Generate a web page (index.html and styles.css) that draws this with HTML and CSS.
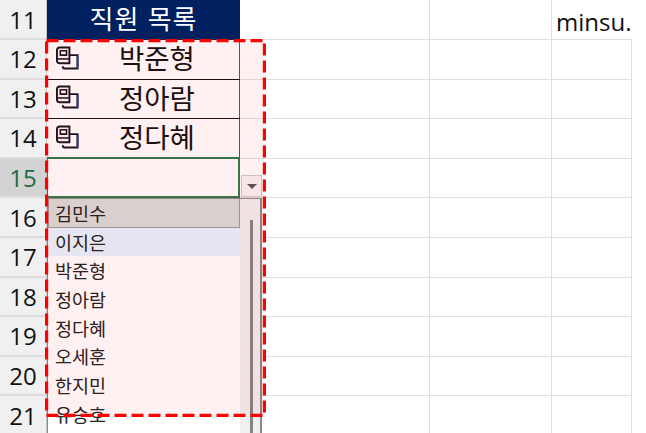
FILE: index.html
```html
<!DOCTYPE html>
<html lang="ko">
<head>
    <meta charset="UTF-8">
    <meta name="viewport" content="width=device-width, initial-scale=1.0">
    <title>직원 목록</title>

    <link rel="stylesheet" href="styles.css">
</head>
<body>
    <svg class="defs" width="0" height="0">
        <symbol id="bookIcon" viewBox="0 0 24 24">
            <path d="M10 9h12.5v14H9.5a2.5 2.5 0 0 1-2.5-2.5" fill="none" stroke="#14141f" stroke-width="2"/>
            <path d="M22.5 9.5v13.5" fill="none" stroke="#24408c" stroke-width="2"/>
            <path d="M4 1h10v16.5H4a3 3 0 0 1-3-3V4a3 3 0 0 1 3-3z" fill="#fff6f5" stroke="#14141f" stroke-width="2"/>
            <path d="M4.5 4.5h6.5v4.5H4.5z" fill="none" stroke="#14141f" stroke-width="1.6"/>
            <path d="M1.5 13h12" fill="none" stroke="#14141f" stroke-width="1.6"/>
        </symbol>
    </svg>

    <div class="sheet">
        <div class="rowHead">11</div>
        <div class="cell titleCell">직원 목록</div>
        <div class="cell"></div>
        <div class="cell"></div>
        <div class="cell emailCell">minsu.</div>

        <div class="rowHead">12</div>
        <div class="cell nameCell"><svg class="bookIcon"><use href="#bookIcon"/></svg><span>박준형</span></div>
        <div class="cell"></div>
        <div class="cell"></div>
        <div class="cell"></div>

        <div class="rowHead">13</div>
        <div class="cell nameCell"><svg class="bookIcon"><use href="#bookIcon"/></svg><span>정아람</span></div>
        <div class="cell"></div>
        <div class="cell"></div>
        <div class="cell"></div>

        <div class="rowHead">14</div>
        <div class="cell nameCell"><svg class="bookIcon"><use href="#bookIcon"/></svg><span>정다혜</span></div>
        <div class="cell"></div>
        <div class="cell"></div>
        <div class="cell"></div>

        <div class="rowHead active">15</div>
        <div class="cell activeCell"></div>
        <div class="cell"></div>
        <div class="cell"></div>
        <div class="cell"></div>

        <div class="rowHead">16</div>
        <div class="cell"></div>
        <div class="cell"></div>
        <div class="cell"></div>
        <div class="cell"></div>

        <div class="rowHead">17</div>
        <div class="cell"></div>
        <div class="cell"></div>
        <div class="cell"></div>
        <div class="cell"></div>

        <div class="rowHead">18</div>
        <div class="cell"></div>
        <div class="cell"></div>
        <div class="cell"></div>
        <div class="cell"></div>

        <div class="rowHead">19</div>
        <div class="cell"></div>
        <div class="cell"></div>
        <div class="cell"></div>
        <div class="cell"></div>

        <div class="rowHead">20</div>
        <div class="cell"></div>
        <div class="cell"></div>
        <div class="cell"></div>
        <div class="cell"></div>

        <div class="rowHead">21</div>
        <div class="cell"></div>
        <div class="cell"></div>
        <div class="cell"></div>
        <div class="cell"></div>

        <div class="dropButton"><div class="arrow"></div></div>

        <div class="dropList">
            <ul>
                <li class="current">김민수</li>
                <li class="hover">이지은</li>
                <li>박준형</li>
                <li>정아람</li>
                <li>정다혜</li>
                <li>오세훈</li>
                <li>한지민</li>
                <li>유승호</li>
            </ul>
            <div class="scrollTrack"><div class="scrollThumb"></div></div>
        </div>

        <div class="highlight">
            <svg width="221" height="378">
                <rect x="1.5" y="1.5" width="218" height="375" fill="none" stroke="#ff0000" stroke-width="3.4" stroke-dasharray="12 5"/>
            </svg>
        </div>
    </div>
</body>
</html>
```

FILE: styles.css
```css
html, body{
    margin: 0;
    height: 100%;
    overflow: hidden;
    background-color: white;
}

.defs{
    display: block;
}

.sheet{
    position: relative;
    width: 632px;
    height: 433px;
    overflow: hidden;
    display: grid;
    grid-template-columns: 47px 193px 190px 122px 80px;
    grid-template-rows: 40px;
    grid-auto-rows: 39.6px;
    font-family: "Open Sans", "Noto Sans CJK KR", sans-serif;
    color: #111;
}

.rowHead{
    display: flex;
    align-items: center;
    justify-content: center;
    background-color: #f0f0f0;
    border-bottom: 2px solid #dcdcdc;
    border-right: 1px solid #c8c8c8;
    font-size: 24px;
    box-sizing: border-box;
}

.rowHead.active{
    background-color: #d3d3d3;
    color: #1d6b3e;
}

.cell{
    box-sizing: border-box;
    border-right: 1px solid #e0e0e0;
    border-bottom: 1px solid #e0e0e0;
    min-width: 0;
    white-space: nowrap;
}

.titleCell{
    display: flex;
    align-items: center;
    justify-content: center;
    background-color: #002060;
    color: white;
    font-family: "Noto Sans CJK KR", sans-serif;
    font-size: 26px;
    line-height: 1.2;
    letter-spacing: 1px;
    border: none;
    padding-bottom: 4px;
}

.emailCell{
    padding-left: 4px;
    font-size: 24px;
    line-height: 39px;
    padding-top: 2px;
    border-right: none;
}

.nameCell{
    display: flex;
    align-items: center;
    border-right: 1px solid #555;
    border-bottom: 1px solid #111;
    padding-left: 9px;
    padding-bottom: 3px;
    font-family: "Noto Sans CJK KR", sans-serif;
    font-size: 27.5px;
    line-height: 1.2;
}

.nameCell span{
    margin-left: 40px;
}

.bookIcon{
    width: 23px;
    height: 24px;
    flex: none;
}

.activeCell{
    border: 2px solid #2f7a4d;
    border-left-width: 1px;
    margin-top: -2px;
}

.dropButton{
    position: absolute;
    left: 241px;
    top: 175px;
    width: 21px;
    height: 22px;
    box-sizing: border-box;
    border: 1px solid #cfcaca;
    background-color: #f7f4f3;
    display: flex;
    align-items: center;
    justify-content: center;
}

.arrow{
    width: 0;
    height: 0;
    border-left: 5px solid transparent;
    border-right: 5px solid transparent;
    border-top: 5px solid #555;
}

.dropList{
    position: absolute;
    left: 47px;
    top: 198px;
    width: 215px;
    height: 250px;
    box-sizing: border-box;
    border: 1px solid #8a8a8a;
    border-right: 2px solid #8a8a8a;
    background-color: white;
    display: flex;
    font-family: "Noto Sans CJK KR", sans-serif;
    font-size: 18.5px;
    color: #222;
}

.dropList ul{
    list-style: none;
    margin: 0;
    padding: 0;
    flex: 1;
}

.dropList li{
    height: 28.7px;
    line-height: 28.7px;
    padding-left: 7px;
    box-sizing: border-box;
}

/* il riquadro rosso sopra schiarisce, quindi qui i colori sono piu freddi */
.dropList li.current{
    background-color: #d7dbd8;
    border: 1px solid #9a9b98;
    border-top: none;
    padding-left: 6px;
}

.dropList li.hover{
    background-color: #e4f4ff;
}

.scrollTrack{
    width: 20px;
    background-color: #f0f0f0;
    position: relative;
}

.scrollThumb{
    position: absolute;
    left: 10px;
    top: 21px;
    width: 3px;
    height: 230px;
    background-color: #858585;
}

.highlight{
    position: absolute;
    left: 45px;
    top: 39px;
    width: 221px;
    height: 378px;
}

.highlight::before{
    content: "";
    position: absolute;
    left: 2px;
    top: 2px;
    right: 2px;
    bottom: 2px;
    background-color: rgba(255, 0, 0, 0.055);
}

.highlight svg{
    position: absolute;
    left: 0;
    top: 0;
}
```
